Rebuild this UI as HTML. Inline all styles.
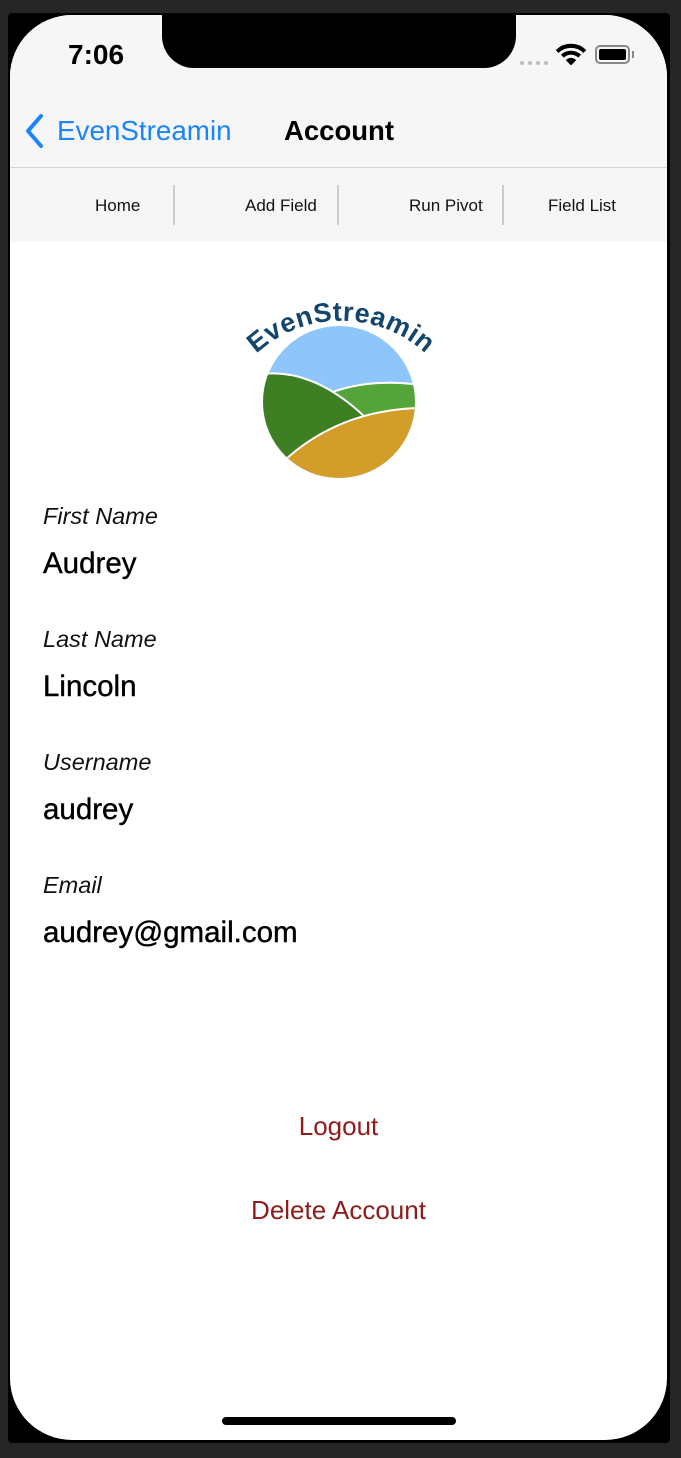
<!DOCTYPE html>
<html><head><meta charset="utf-8"><style>
html,body{margin:0;padding:0;background:#262626;width:681px;height:1458px;overflow:hidden;font-family:"Liberation Sans",sans-serif}
.phone{position:absolute;left:8px;top:13px;width:662px;height:1430px;background:#000;border-radius:4px}
.screen{position:absolute;left:10px;top:15px;width:657px;height:1425px;background:#fff;border-radius:62px;overflow:hidden}
.nav{position:absolute;left:0;top:0;width:657px;height:227px;background:#f6f6f6}
.notch{position:absolute;left:152px;top:-2px;width:354px;height:55px;background:#000;border-radius:0 0 32px 32px}
.time{position:absolute;left:58px;top:24px;font-size:28px;font-weight:bold;color:#000}
.back{position:absolute;left:47px;top:100px;font-size:27.8px;color:#1a84ff}
.title{position:absolute;left:274px;top:100px;font-size:27.5px;font-weight:bold;color:#000}
.hl{position:absolute;left:0;top:152px;width:657px;height:1px;background:#d3d3d3}
.tab{position:absolute;top:181px;font-size:17px;color:#111}
.sep{position:absolute;top:170px;width:2px;height:40px;background:#ccc}
.lbl{position:absolute;left:33px;font-size:23.5px;font-style:italic;color:#111}
.val{position:absolute;left:33px;font-size:29.5px;color:#000;-webkit-text-stroke:0.4px #000}
.red{position:absolute;width:657px;text-align:center;font-size:26px;color:#8f1b1b}
.home{position:absolute;left:212px;top:1402px;width:234px;height:8px;background:#000;border-radius:4px}
</style></head><body>
<div class="phone"></div>
<div class="screen">
<div class="nav"></div>
<div class="notch"></div>
<div class="time">7:06</div>
<div style="position:absolute;left:510px;top:46px;width:28px;height:4px;border-top:4px dotted #bbb"></div>
<svg style="position:absolute;left:546px;top:28px" width="30" height="24" viewBox="0 0 26 20"><path d="M1 7 A17 17 0 0 1 25 7" stroke="#000" stroke-width="3.5" fill="none"/><path d="M5.5 11 A11 11 0 0 1 20.5 11" stroke="#000" stroke-width="3.5" fill="none"/><path d="M13 19 L8.5 14.5 A6 6 0 0 1 17.5 14.5 Z" fill="#000"/></svg>
<div style="position:absolute;left:585px;top:30px;width:35px;height:19px;border:2px solid #888;border-radius:5px;box-sizing:border-box"><div style="margin:2px;height:11px;background:#000;border-radius:2px"></div></div>
<div style="position:absolute;left:622px;top:36px;width:2px;height:7px;background:#888"></div>
<svg style="position:absolute;left:14px;top:98px" width="22" height="36" viewBox="0 0 22 36"><path d="M17 3 L4 18 L17 33" stroke="#1a84ff" stroke-width="4" fill="none" stroke-linecap="round" stroke-linejoin="round"/></svg>
<div class="back">EvenStreamin</div>
<div class="title">Account</div>
<div class="hl"></div>
<div class="tab" style="left:85px">Home</div>
<div class="sep" style="left:163px"></div>
<div class="tab" style="left:235px">Add Field</div>
<div class="sep" style="left:327px"></div>
<div class="tab" style="left:399px">Run Pivot</div>
<div class="sep" style="left:492px"></div>
<div class="tab" style="left:538px">Field List</div>

<svg style="position:absolute;left:220px;top:275px" width="220" height="205" viewBox="230 290 220 205">
<defs><clipPath id="c"><circle cx="339" cy="402" r="76"/></clipPath>
<path id="arc" d="M250 360 A125 125 0 0 1 432 360"/></defs>
<g clip-path="url(#c)">
<rect x="260" y="320" width="160" height="170" fill="#8ec6fb"/>
<path d="M330 393 Q370 378 420 385 L420 420 L350 430 Z" fill="#55a43a" stroke="#fff" stroke-width="2"/>
<path d="M255 375 Q310 365 365 417 L290 460 L255 470 Z" fill="#3d7f22" stroke="#fff" stroke-width="2"/>
<path d="M285 460 Q340 410 420 408 L420 490 L280 490 Z" fill="#d39d2a" stroke="#fff" stroke-width="2"/>
</g>
<text font-family="Liberation Sans,sans-serif" font-size="27" font-weight="bold" fill="#12466e" letter-spacing="0.5"><textPath href="#arc" startOffset="50%" text-anchor="middle">EvenStreamin</textPath></text>
</svg>

<div class="lbl" style="top:488px">First Name</div>
<div class="val" style="top:532px">Audrey</div>
<div class="lbl" style="top:611px">Last Name</div>
<div class="val" style="top:655px">Lincoln</div>
<div class="lbl" style="top:734px">Username</div>
<div class="val" style="top:778px">audrey</div>
<div class="lbl" style="top:857px">Email</div>
<div class="val" style="top:901px">audrey@gmail.com</div>
<div class="red" style="top:1096px">Logout</div>
<div class="red" style="top:1180px">Delete Account</div>
<div class="home"></div>
</div>
</body></html>
